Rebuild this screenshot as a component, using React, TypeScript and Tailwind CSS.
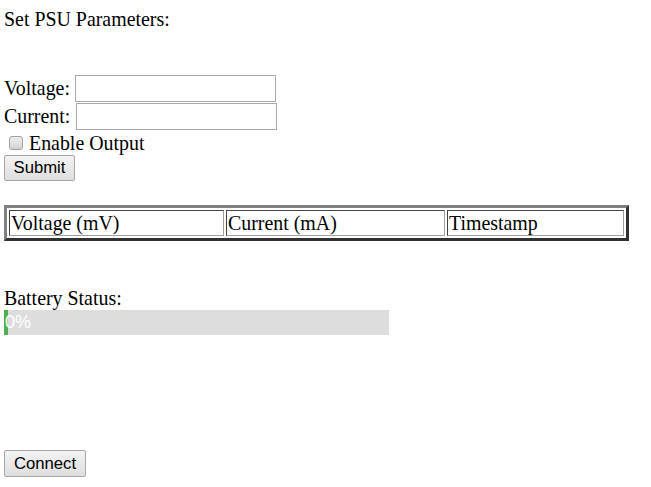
import React from "react";

const headers = ["Voltage (mV)", "Current (mA)", "Timestamp"];
const cellWidths = ["w-[215px]", "w-[219px]", ""];

const btn =
  "h-[26px] border border-[#a6a6a6] rounded-[2px] bg-gradient-to-b from-[#f3f3f3] to-[#dedede] font-['Liberation_Sans',Arial,sans-serif] text-[16.7px] leading-[20px] text-black";

export default function App() {
  const battery = 0;

  return (
    <div className="min-h-[487px] bg-white px-[4px] pt-[8px] font-['Liberation_Serif','Times_New_Roman',serif] text-[19.9px] leading-[23px] text-black">
      <p>Set PSU Parameters:</p>

      {/* Form */}
      <form className="mt-[44px] flex flex-col items-start" onSubmit={(e) => e.preventDefault()}>
        <div className="flex h-[27px] items-center">
          <label htmlFor="voltage">Voltage:</label>
          <input id="voltage" type="text" className="ml-[5px] h-[27px] w-[201px] border border-[#a9a9a9] bg-white" />
        </div>
        <div className="mt-[1px] flex h-[27px] items-center">
          <label htmlFor="current">Current:</label>
          <input id="current" type="text" className="ml-[6px] h-[27px] w-[201px] border border-[#a9a9a9] bg-white" />
        </div>
        <label className="flex h-[25px] items-center pt-[1px]">
          <input
            type="checkbox"
            className="ml-[5px] h-[14px] w-[14px] appearance-none rounded-[3px] border border-[#a0a0a0] bg-gradient-to-b from-[#eeeeee] to-[#d4d4d4]"
          />
          <span className="ml-[6px]">Enable Output</span>
        </label>
        <button type="submit" className={`${btn} w-[71px]`}>
          Submit
        </button>
      </form>

      {/* Readings table */}
      <table className="mt-[24px] w-[625px] table-fixed border-separate border-spacing-[2px] border-[3px] border-t-[#808080] border-l-[#808080] border-r-[#303030] border-b-[#303030]">
        <tbody>
          <tr>
            {headers.map((h, i) => (
              <td
                key={h}
                className={`${cellWidths[i]} border border-t-[#444] border-l-[#444] border-r-[#a0a0a0] border-b-[#a0a0a0] px-[1px] py-[1px] text-left leading-[22px]`}
              >
                {h}
              </td>
            ))}
          </tr>
        </tbody>
      </table>

      {/* Battery */}
      <p className="mt-[46px]">Battery Status:</p>
      <div className="h-[25px] w-[385px] bg-[#dddddd]">
        <div
          className="h-[25px] overflow-visible whitespace-nowrap bg-[#4caf50] pl-[1px] font-['Liberation_Sans',Arial,sans-serif] text-[18px] leading-[25px] text-white"
          style={{ width: `${Math.max(battery, 1)}%` }}
        >
          {battery}%
        </div>
      </div>

      <button type="button" className={`${btn} mt-[115px] h-[27px] w-[82px]`}>
        Connect
      </button>
    </div>
  );
}
